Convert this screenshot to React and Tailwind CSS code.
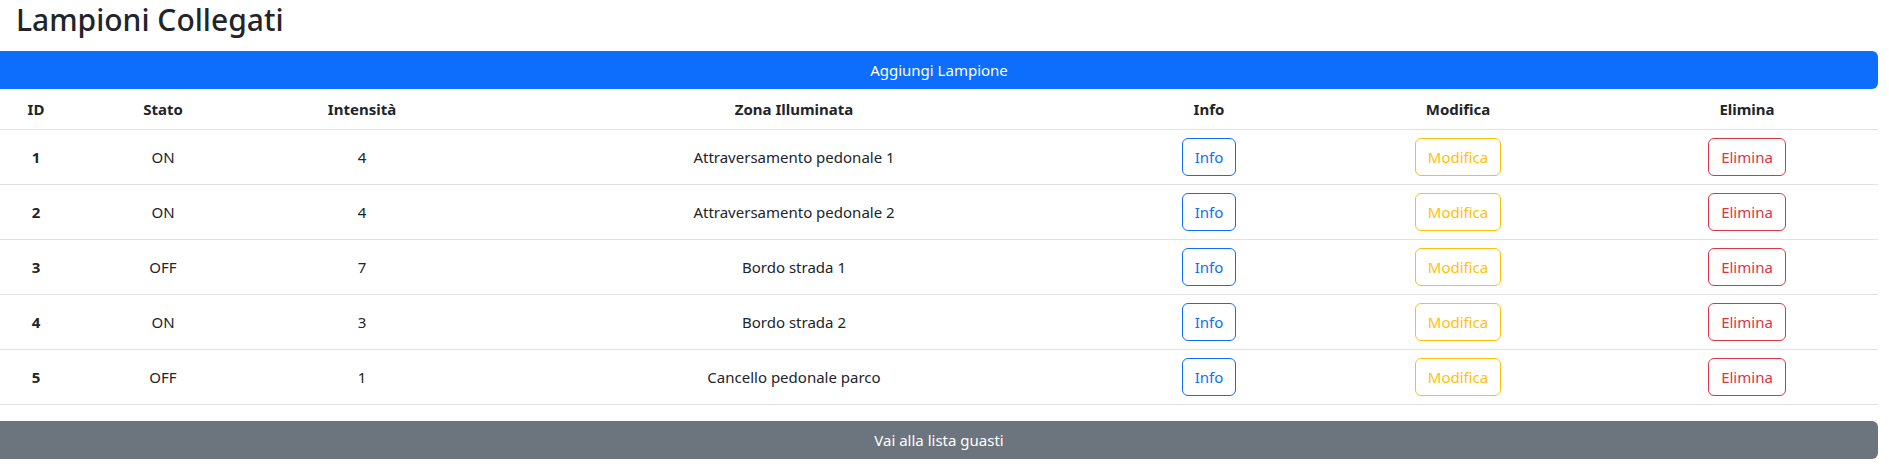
const lampioni = [
  { id: 1, stato: "ON", intensita: 4, zona: "Attraversamento pedonale 1" },
  { id: 2, stato: "ON", intensita: 4, zona: "Attraversamento pedonale 2" },
  { id: 3, stato: "OFF", intensita: 7, zona: "Bordo strada 1" },
  { id: 4, stato: "ON", intensita: 3, zona: "Bordo strada 2" },
  { id: 5, stato: "OFF", intensita: 1, zona: "Cancello pedonale parco" },
];

const App = () => {
  return (
    <div className="min-h-[473px] bg-white text-[#212529] font-['Noto_Sans',sans-serif] text-[15px] leading-[24px]">
      <h2 className="h-[51px] pl-4 pt-[1px] text-[30px] leading-[38px] font-medium">Lampioni Collegati</h2>

      <button className="w-[1878px] h-[38px] bg-[#0d6efd] text-white rounded-r-md">Aggiungi Lampione</button>

      <table className="w-[1878px] table-fixed border-collapse text-center mb-4">
        <colgroup>
          <col className="w-[72px]" />
          <col className="w-[182px]" />
          <col className="w-[216px]" />
          <col className="w-[648px]" />
          <col className="w-[182px]" />
          <col className="w-[316px]" />
          <col className="w-[262px]" />
        </colgroup>
        <thead>
          <tr className="border-b border-[#dee2e6]">
            <th className="p-2 font-bold">ID</th>
            <th className="p-2 font-bold">Stato</th>
            <th className="p-2 font-bold">Intensità</th>
            <th className="p-2 font-bold">Zona Illuminata</th>
            <th className="p-2 font-bold">Info</th>
            <th className="p-2 font-bold">Modifica</th>
            <th className="p-2 font-bold">Elimina</th>
          </tr>
        </thead>
        <tbody>
          {lampioni.map((l) => (
            <tr key={l.id} className="border-b border-[#dee2e6]">
              <td className="p-2 font-bold">{l.id}</td>
              <td className="p-2">{l.stato}</td>
              <td className="p-2">{l.intensita}</td>
              <td className="p-2">{l.zona}</td>
              <td className="p-2">
                <button className="px-3 py-[6px] border border-[#0d6efd] text-[#0d6efd] rounded-md">Info</button>
              </td>
              <td className="p-2">
                <button className="px-3 py-[6px] border border-[#ffc107] text-[#ffc107] rounded-md">Modifica</button>
              </td>
              <td className="p-2">
                <button className="px-3 py-[6px] border border-[#dc3545] text-[#dc3545] rounded-md">Elimina</button>
              </td>
            </tr>
          ))}
        </tbody>
      </table>

      <button className="w-[1878px] h-[38px] bg-[#6c757d] text-white rounded-r-md">Vai alla lista guasti</button>
    </div>
  );
};

export default App;
